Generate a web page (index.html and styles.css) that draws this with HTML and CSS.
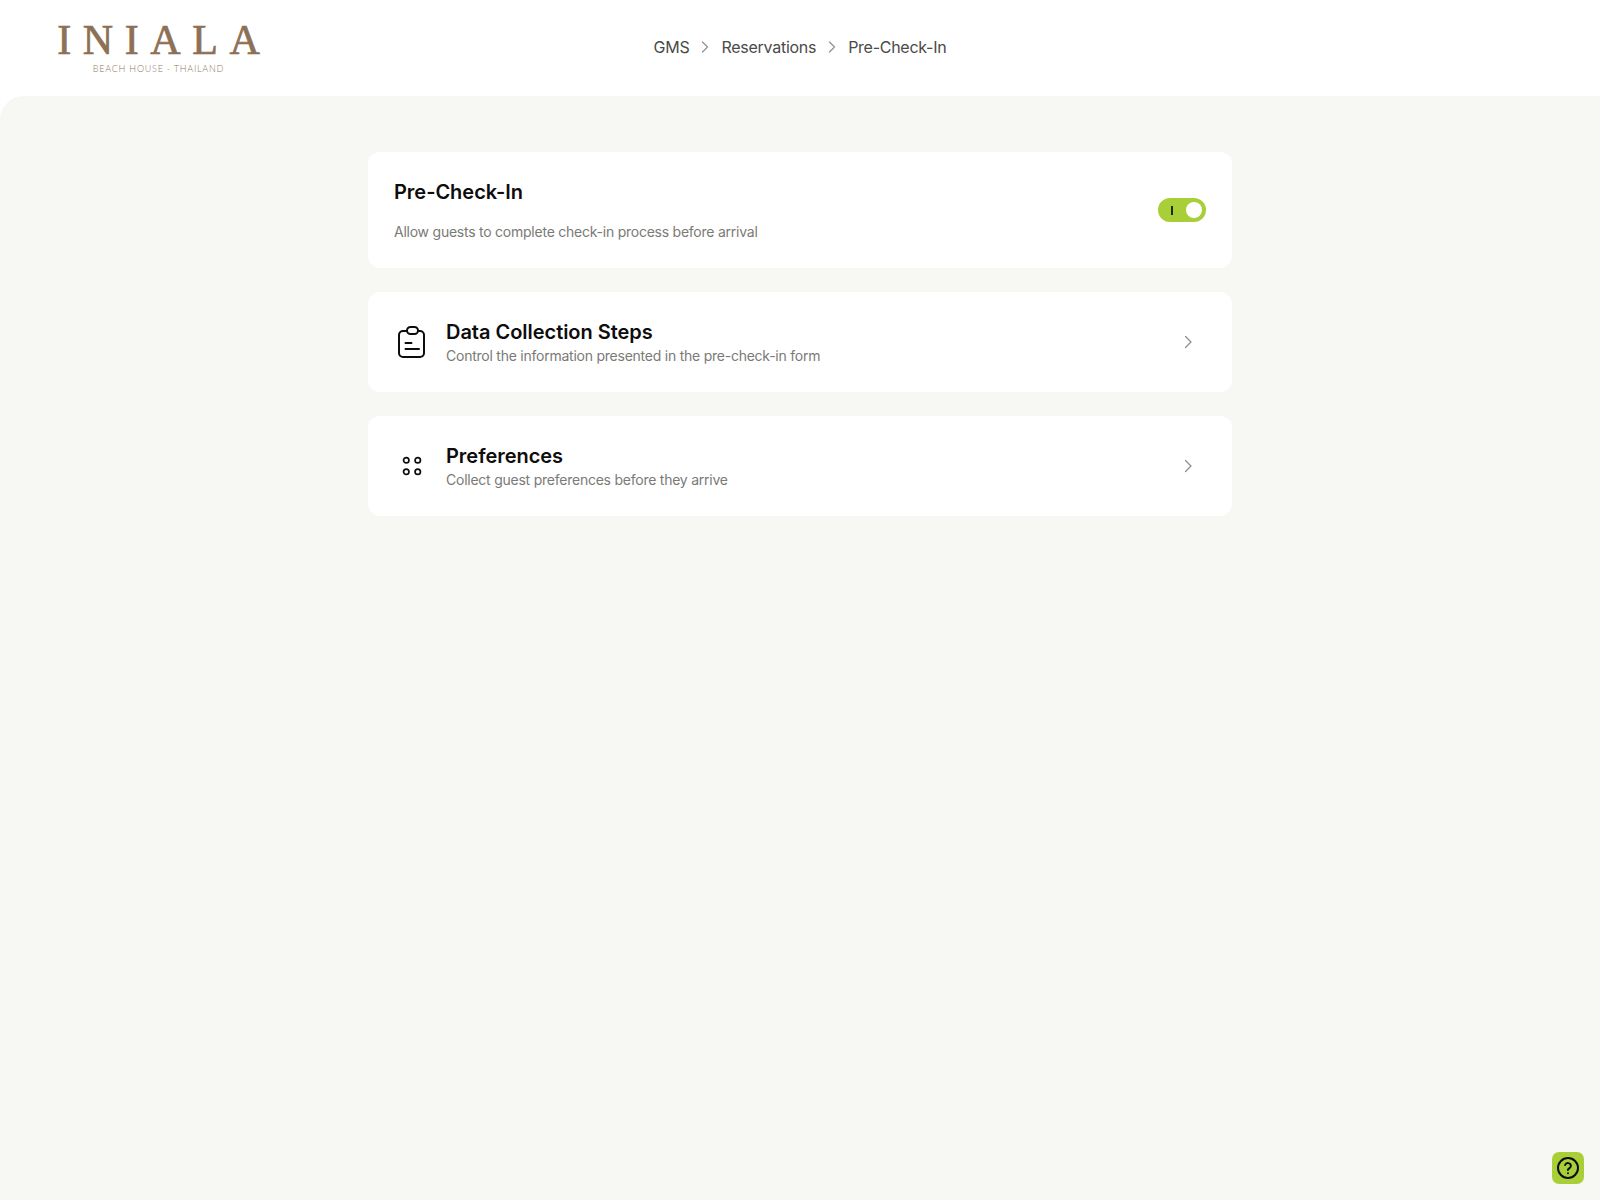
FILE: index.html
```html
<!DOCTYPE html>
<html lang="en">
<head>
<meta charset="utf-8">
<title>Pre-Check-In</title>
<link rel="stylesheet" href="styles.css">
</head>
<body>
<header class="topbar">
  <div class="logo">
    <div class="logo-name">INIALA</div>
    <div class="logo-sub">BEACH HOUSE - THAILAND</div>
  </div>
  <nav class="crumbs">
    <span>GMS</span>
    <svg class="crumb-sep" viewBox="0 0 16 16" fill="none"><path d="M5.500 3 10.500 8l-5 5" stroke="#949494" stroke-width="1.300" stroke-linecap="round" stroke-linejoin="round"/></svg>
    <span>Reservations</span>
    <svg class="crumb-sep" viewBox="0 0 16 16" fill="none"><path d="M5.500 3 10.500 8l-5 5" stroke="#949494" stroke-width="1.300" stroke-linecap="round" stroke-linejoin="round"/></svg>
    <span>Pre-Check-In</span>
  </nav>
</header>
<main class="content">
  <section class="card card-toggle">
    <div class="toggle-text">
      <h2 class="title">Pre-Check-In</h2>
      <p class="desc">Allow guests to complete check-in process before arrival</p>
    </div>
    <div class="switch"><span class="switch-bar"></span><span class="switch-knob"></span></div>
  </section>
  <section class="card card-link">
    <svg class="icon" viewBox="0 0 32 32" fill="none" stroke="#0d0d0d" stroke-width="2" stroke-linecap="round" stroke-linejoin="round">
      <path d="M10.500 5H7a4 4 0 0 0-4 4v18a4 4 0 0 0 4 4h17a4 4 0 0 0 4-4V9a4 4 0 0 0-4-4h-1.500"/>
      <rect x="11" y="1" width="11" height="7" rx="3.500"/>
      <path d="M9.500 17h6M9.500 23h13.500"/>
    </svg>
    <div class="link-text">
      <h2 class="title">Data Collection Steps</h2>
      <p class="desc">Control the information presented in the pre-check-in form</p>
    </div>
    <svg class="chev" viewBox="0 0 16 16" fill="none"><path d="M5.500 2.500 11 8l-5.500 5.500" stroke="#8c8c8c" stroke-width="1.200" stroke-linecap="round" stroke-linejoin="round"/></svg>
  </section>
  <section class="card card-link">
    <svg class="icon" viewBox="0 0 32 32" fill="none" stroke="#0d0d0d" stroke-width="1.700">
      <circle cx="10.250" cy="10.250" r="2.700"/><circle cx="21.750" cy="10.250" r="2.700"/>
      <circle cx="10.250" cy="21.750" r="2.700"/><circle cx="21.750" cy="21.750" r="2.700"/>
    </svg>
    <div class="link-text">
      <h2 class="title">Preferences</h2>
      <p class="desc">Collect guest preferences before they arrive</p>
    </div>
    <svg class="chev" viewBox="0 0 16 16" fill="none"><path d="M5.500 2.500 11 8l-5.500 5.500" stroke="#8c8c8c" stroke-width="1.200" stroke-linecap="round" stroke-linejoin="round"/></svg>
  </section>
  <button class="help" type="button" aria-label="Help">
    <svg viewBox="0 0 24 24" fill="none" stroke="#0d0d0d" stroke-width="2" stroke-linecap="round" stroke-linejoin="round">
      <circle cx="12" cy="12" r="10"/>
      <path d="M9.100 9a3 3 0 0 1 5.800 1c0 2-3 2.600-3 4"/>
      <path d="M12 17.200h.01"/>
    </svg>
  </button>
</main>
</body>
</html>
```
FILE: styles.css
```css
* { box-sizing: border-box; }
html, body { margin: 0; padding: 0; }
body {
  width: 1600px;
  height: 1200px;
  overflow: hidden;
  background: #fff;
  font-family: Inter, "Liberation Sans", sans-serif;
  color: #0d0d0d;
}
.topbar {
  height: 96px;
  display: grid;
  grid-template-columns: 1fr auto 1fr;
  align-items: center;
  padding: 0 56px;
}
.logo {
  width: 205px;
  display: flex;
  flex-direction: column;
  align-items: center;
  color: #8d7055;
}
.logo-name {
  font-family: "Liberation Serif", serif;
  font-weight: 400;
  font-size: 42px;
  line-height: 38px;
  letter-spacing: 11.600px;
  margin-right: -11.600px;
  margin-top: -1px;
  -webkit-text-stroke: 0.700px #8d7055;
  white-space: nowrap;
}
.logo-sub {
  font-family: Lato, "Liberation Sans", sans-serif;
  font-weight: 300;
  font-size: 9px;
  line-height: 12px;
  letter-spacing: 0.750px;
  margin-top: 4px;
  color: #8a7866;
  white-space: nowrap;
}
.crumbs {
  display: flex;
  align-items: center;
  gap: 8px;
  margin-bottom: 2px;
  font-size: 16px;
  line-height: 24px;
  letter-spacing: -0.270px;
  color: #4a4a48;
}
.crumb-sep { width: 16px; height: 16px; }
.content {
  position: relative;
  height: 1104px;
  background: #f7f8f4;
  border-top-left-radius: 24px;
  padding-top: 56px;
  display: flex;
  flex-direction: column;
  align-items: center;
  gap: 24px;
}
.card {
  width: 864px;
  background: #fff;
  border-radius: 12px;
  display: flex;
  align-items: center;
}
.card-toggle {
  height: 116px;
  padding: 0 26px;
  justify-content: space-between;
}
.card-link {
  height: 100px;
  padding: 0 26px 0 28px;
}
.title {
  margin: 0;
  font-size: 20px;
  line-height: 28px;
  font-weight: 600;
  letter-spacing: -0.030px;
}
.desc {
  margin: 0;
  font-size: 14px;
  line-height: 20px;
  letter-spacing: -0.240px;
  color: #7a7a76;
}
.toggle-text { display: flex; flex-direction: column; gap: 16px; }
.switch {
  width: 48px;
  height: 24px;
  border-radius: 12px;
  background: #a9cf38;
  display: flex;
  align-items: center;
  justify-content: space-between;
  padding: 0 4px 0 13px;
}
.switch-bar { width: 2px; height: 9px; background: #1c2a05; }
.switch-knob { width: 16px; height: 16px; border-radius: 50%; background: #fff; }
.icon { width: 32px; height: 32px; flex: none; margin-right: 18px; }
.link-text { flex: 1; display: flex; flex-direction: column; }
.chev { width: 16px; height: 16px; flex: none; margin-right: 10px; }
.help {
  position: absolute;
  right: 16px;
  bottom: 16px;
  width: 32px;
  height: 32px;
  padding: 4px;
  border: 0;
  border-radius: 7px;
  background: #a9cf38;
  display: flex;
}
.help svg { width: 24px; height: 24px; }
```
